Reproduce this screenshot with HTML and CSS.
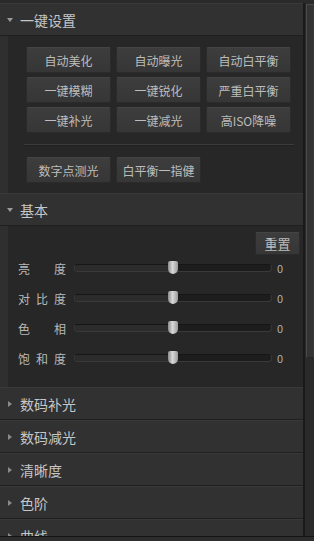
FILE: index.html
```html
<!DOCTYPE html>
<html lang="zh-CN">
  <head>
    <meta charset="UTF-8" />
    <title>调整面板</title>
    <link rel="stylesheet" href="styles.css">
  </head>
  <body>
    <div class="panel">
      <div class="main">
        <section class="group">
          <div class="head"><span class="arrow open"></span>一键设置</div>
          <div class="body quick">
            <div class="btn-grid">
              <button class="btn">自动美化</button>
              <button class="btn">自动曝光</button>
              <button class="btn">自动白平衡</button>
              <button class="btn">一键模糊</button>
              <button class="btn">一键锐化</button>
              <button class="btn">严重白平衡</button>
              <button class="btn">一键补光</button>
              <button class="btn">一键减光</button>
              <button class="btn">高ISO降噪</button>
            </div>
            <div class="sep"></div>
            <div class="btn-grid">
              <button class="btn">数字点测光</button>
              <button class="btn">白平衡一指健</button>
            </div>
          </div>
        </section>

        <section class="group">
          <div class="head"><span class="arrow open"></span>基本</div>
          <div class="body basic">
            <div class="reset-row"><button class="btn small">重置</button></div>
            <div class="slider-row">
              <div class="label"><span>亮</span><span>度</span></div>
              <div class="track"><div class="fill"></div><div class="thumb"></div></div>
              <div class="value">0</div>
            </div>
            <div class="slider-row">
              <div class="label"><span>对</span><span>比</span><span>度</span></div>
              <div class="track"><div class="fill"></div><div class="thumb"></div></div>
              <div class="value">0</div>
            </div>
            <div class="slider-row">
              <div class="label"><span>色</span><span>相</span></div>
              <div class="track"><div class="fill"></div><div class="thumb"></div></div>
              <div class="value">0</div>
            </div>
            <div class="slider-row">
              <div class="label"><span>饱</span><span>和</span><span>度</span></div>
              <div class="track"><div class="fill"></div><div class="thumb"></div></div>
              <div class="value">0</div>
            </div>
          </div>
        </section>

        <section class="group">
          <div class="head"><span class="arrow"></span>数码补光</div>
        </section>
        <section class="group">
          <div class="head"><span class="arrow"></span>数码减光</div>
        </section>
        <section class="group">
          <div class="head"><span class="arrow"></span>清晰度</div>
        </section>
        <section class="group">
          <div class="head"><span class="arrow"></span>色阶</div>
        </section>
        <section class="group">
          <div class="head"><span class="arrow"></span>曲线</div>
        </section>
      </div>
      <div class="scrollbar"><div class="scroll-thumb"></div></div>
    </div>
    <div class="status"></div>
  </body>
</html>
```

FILE: styles.css
```css
html,
body {
  height: 100%;
}

body {
  margin: 0;
  background-color: #2c2c2c;
  font-family: "Noto Sans CJK SC", "DejaVu Sans", sans-serif;
  color: #c4c4c4;
  display: flex;
  flex-direction: column;
  overflow: hidden;
}

.panel {
  display: flex;
  height: 536px;
  flex-shrink: 0;
  border-top: 3px solid #2a2a2a;
  box-sizing: border-box;
}

.main {
  flex: 1;
  overflow: hidden;
  background-color: #2f2f2f;
}

.head {
  height: 31px;
  display: flex;
  align-items: center;
  padding-left: 20px;
  font-size: 14px;
  color: #c6c6c6;
  background-color: #313131;
  border-top: 1px solid #393939;
  border-bottom: 1px solid #1f1f1f;
  position: relative;
}

/* triangle in front of each group title */
.arrow {
  position: absolute;
  left: 8px;
  top: 13px;
  width: 0;
  height: 0;
  border-top: 3px solid transparent;
  border-bottom: 3px solid transparent;
  border-left: 4px solid #8a8a8a;
}

.arrow.open {
  left: 7px;
  top: 14px;
  border-left: 3px solid transparent;
  border-right: 3px solid transparent;
  border-top: 4px solid #9a9a9a;
  border-bottom: none;
}

.body {
  margin-left: 8px;
  background-color: #272727;
}

.quick {
  padding: 11px 0 10px 18px;
}

.btn-grid {
  display: grid;
  grid-template-columns: repeat(3, 85px);
  gap: 4px 5px;
}

.btn {
  height: 26px;
  padding: 0;
  font-family: inherit;
  font-size: 12px;
  color: #bdbdbd;
  background: linear-gradient(#3d3d3d, #363636);
  border: 1px solid #2b2b2b;
  border-top-color: #444;
  border-radius: 2px;
}

.sep {
  height: 1px;
  margin: 11px 9px 11px -2px;
  background-color: #3c3c3c;
  border-bottom: 1px solid #202020;
}

.basic {
  padding: 6px 0 18px 10px;
}

.reset-row {
  display: flex;
  justify-content: flex-end;
  padding-right: 3px;
}

.btn.small {
  width: 45px;
  height: 23px;
  font-size: 13px;
}

.slider-row {
  height: 22px;
  margin-top: 8px;
  display: flex;
  align-items: center;
  font-size: 12px;
}

.reset-row + .slider-row {
  margin-top: 2px;
}

.label {
  width: 48px;
  display: flex;
  justify-content: space-between;
  color: #b8b8b8;
}

.track {
  position: relative;
  width: 196px;
  height: 6px;
  margin-left: 8px;
  background-color: #1d1d1d;
  border: 1px solid #3a3a3a;
  border-top-color: #161616;
  border-radius: 4px;
}

.fill {
  width: 50%;
  height: 100%;
  background-color: #2c2c2c;
  border-radius: 4px 0 0 4px;
}

.thumb {
  position: absolute;
  left: 93px;
  top: -4px;
  width: 10px;
  height: 13px;
  background: linear-gradient(90deg, #8c8c8c, #d8d8d8 45%, #9a9a9a);
  border-radius: 2px 2px 5px 5px;
}

.value {
  margin-left: 5px;
  font-size: 11px;
  color: #b0b0b0;
}

.scrollbar {
  width: 11px;
  background-color: #2a2a2a;
  border-left: 2px solid #1a1a1a;
  box-sizing: border-box;
  padding: 1px 0 0 1px;
}

.scroll-thumb {
  height: 352px;
  background-color: #333;
  border: 1px solid #4a4a4a;
  border-right-color: #3a3a3a;
  border-bottom-color: #262626;
}

.status {
  flex: 1;
  background-color: #2d2d2d;
  border-top: 1px solid #141414;
}
```
